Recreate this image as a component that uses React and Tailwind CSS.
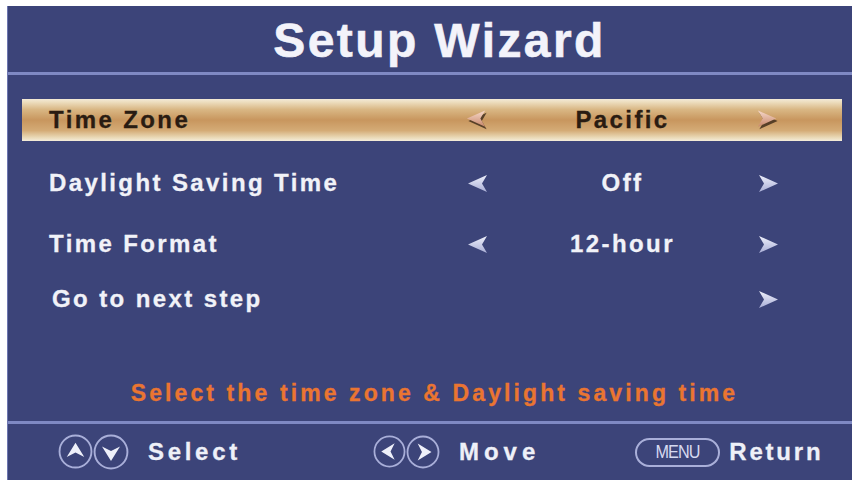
import React from "react"

const font = "font-['Liberation_Sans',Arial,sans-serif]"

function RowArrow({ dir, hot }) {
    const pts = dir === "right" ? "1,1 20,9.5 1,18 6,9.5" : "20,1 1,9.5 20,18 15,9.5"
    if (hot) {
        return (
            <svg width="25" height="25" viewBox="0 0 25 25">
                <defs>
                    <linearGradient id={"hg" + dir} x1="0" y1="0" x2="0" y2="1">
                        <stop offset="0" stopColor="#f7d9cb" />
                        <stop offset="1" stopColor="#c7876a" />
                    </linearGradient>
                </defs>
                <g transform="translate(2.5,3.5)">
                    <polygon points={pts} fill="#3a2818" opacity="0.8" />
                </g>
                <g transform="translate(1,1)">
                    <polygon points={pts} fill={"url(#hg" + dir + ")"} />
                </g>
            </svg>
        )
    }
    return (
        <svg width="23" height="21" viewBox="0 0 23 21">
            <defs>
                <linearGradient id={"ng" + dir} x1="0" y1="0" x2="0" y2="1">
                    <stop offset="0" stopColor="#eef0fb" />
                    <stop offset="1" stopColor="#a9aed6" />
                </linearGradient>
            </defs>
            <g transform="translate(1,1)">
                <polygon points={pts} fill={"url(#ng" + dir + ")"} />
            </g>
        </svg>
    )
}

function CircleKey({ dir, size }) {
    const shapes = {
        up: "16,8 24,21 16,17 8,21",
        down: "16,24 24,11 16,15 8,11",
        left: "8,16 21,8 17,16 21,24",
        right: "24,16 11,8 15,16 11,24",
    }
    return (
        <svg width={size} height={size} viewBox="0 0 32 32">
            <circle cx="16" cy="16" r="14.6" fill="none" stroke="#a9afd9" strokeWidth="1.7" />
            <polygon points={shapes[dir]} fill="#eef0fa" />
        </svg>
    )
}

function Row({ label, value, hot, left = true, className = "" }) {
    return (
        <div
            className={`flex items-center h-[42px] ml-[14px] mr-[10px] pl-[27px] ${className} ${
                hot
                    ? "bg-[linear-gradient(to_bottom,#f3ead6_0%,#ecdcbc_8%,#d9b784_25%,#c8965e_50%,#d4ab76_75%,#eadab8_92%,#f4ecda_100%)] text-[#2a1c12]"
                    : "text-[#f1f2f8]"
            }`}
        >
            <div className="w-[416px] text-[24px] font-bold tracking-[2.4px] leading-none [-webkit-text-stroke:0.3px]">{label}</div>
            <div className="w-[24px] flex justify-center">{left && <RowArrow dir="left" hot={hot} />}</div>
            <div className="w-[267px] text-center text-[24px] font-bold tracking-[2.4px] leading-none [-webkit-text-stroke:0.3px]">{value}</div>
            <div className="w-[24px] flex justify-center"><RowArrow dir="right" hot={hot} /></div>
        </div>
    )
}

export default function App() {
    return (
        <div className={`w-[856px] h-[482px] bg-white pt-[6px] pl-[7px] ${font}`}>
            <div className="w-[845px] h-[474px] bg-[#3c4479] border-l border-[#6d76b0] flex flex-col">
                {/* header */}
                <div className="h-[66px] pt-[3px] pl-[19px] flex items-center justify-center">
                    <p className="text-[48px] font-bold text-[#f3f3fa] tracking-[2.4px] leading-none [-webkit-text-stroke:0.6px]">Setup Wizard</p>
                </div>
                <div className="h-[3px] bg-[#7f89c3]"></div>

                {/* rows */}
                <div className="pt-[24px] flex flex-col">
                    <Row label="Time Zone" value="Pacific" hot />
                    <Row label="Daylight Saving Time" value="Off" className="mt-[21px]" />
                    <Row label="Time Format" value="12-hour" className="mt-[19px]" />
                    <Row label={<span className="ml-[3px]">Go to next step</span>} value="" left={false} className="mt-[13px]" />
                </div>

                <div className="mt-[58px] h-[30px] pl-[9px] flex items-center justify-center">
                    <p className="text-[23px] font-bold text-[#ea7531] tracking-[3.1px] leading-none [-webkit-text-stroke:0.3px]">
                        Select the time zone &amp; Daylight saving time
                    </p>
                </div>

                <div className="mt-[13px] h-[3px] bg-[#7f89c3]"></div>

                {/* footer */}
                <div className="flex-1 flex items-center text-[#eef0f8] text-[24px] font-bold tracking-[3.7px] leading-none [-webkit-text-stroke:0.3px]">
                    <div className="ml-[50px] flex">
                        <CircleKey dir="up" size={35} />
                        <CircleKey dir="down" size={36} />
                    </div>
                    <span className="ml-[19px]">Select</span>
                    <div className="ml-[132px] flex">
                        <CircleKey dir="left" size={33} />
                        <CircleKey dir="right" size={34} />
                    </div>
                    <span className="ml-[19px] tracking-[5px]">Move</span>
                    <div className="ml-[95px] w-[85px] h-[29px] rounded-full border-2 border-[#a9afd9] flex items-center justify-center [-webkit-text-stroke:0px]">
                        <span className="text-[18px] font-normal tracking-[-1px] text-[#d6d9f0] scale-x-90">MENU</span>
                    </div>
                    <span className="ml-[9px] tracking-[2.8px]">Return</span>
                </div>
            </div>
        </div>
    )
}
